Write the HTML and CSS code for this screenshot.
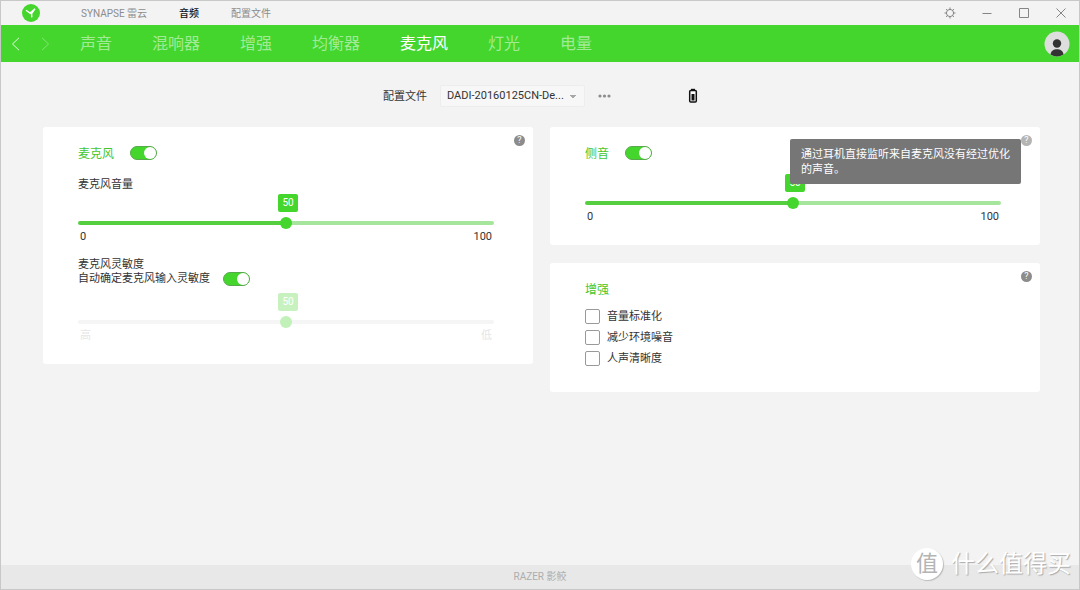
FILE: index.html
```html
<!DOCTYPE html>
<html lang="zh-CN">
<head>
<meta charset="utf-8">
<title>雷云 - 麦克风</title>
<link rel="stylesheet" href="styles.css">
</head>
<body>
<div class="window">
  <header class="titlebar">
    <svg class="logo" viewBox="0 0 18 18" aria-hidden="true">
      <circle cx="9" cy="9" r="9" fill="#44d62c"/>
      <path d="M4 6.200 8 9 13 4.800M12.700 5.200 9.600 9.600 9.800 13.400M7.600 8.600 9.800 10.200" fill="none" stroke="#fff" stroke-width="1.400"/>
    </svg>
    <nav class="tabs">
      <a class="tab" href="#synapse">SYNAPSE 雷云</a>
      <a class="tab tab-active" href="#audio">音频</a>
      <a class="tab" href="#profiles">配置文件</a>
    </nav>
    <div class="window-buttons">
      <button type="button" class="icon-button" aria-label="设置">
        <svg width="12" height="12" viewBox="0 0 12 12" fill="none" stroke="#858585"><circle cx="6" cy="6" r="3.6"/><path d="M6 .5v2M6 9.500v2M.5 6h2M9.500 6h2M2.100 2.100l1.400 1.400M8.500 8.500l1.400 1.400M9.900 2.100 8.500 3.500M3.500 8.500 2.100 9.900"/></svg>
      </button>
      <button type="button" class="icon-button" aria-label="最小化">
        <svg width="12" height="12" viewBox="0 0 12 12" fill="none" stroke="#858585"><path d="M1.500 6.500h9"/></svg>
      </button>
      <button type="button" class="icon-button" aria-label="最大化">
        <svg width="12" height="12" viewBox="0 0 12 12" fill="none" stroke="#858585"><path d="M1.500 1.500h9v9h-9z"/></svg>
      </button>
      <button type="button" class="icon-button" aria-label="关闭">
        <svg width="12" height="12" viewBox="0 0 12 12" fill="none" stroke="#858585"><path d="M1.500 1.500l9 9M10.500 1.500l-9 9"/></svg>
      </button>
    </div>
  </header>

  <div class="navbar">
    <div class="history">
      <button type="button" class="icon-button" aria-label="后退">
        <svg width="10" height="14" viewBox="0 0 10 14" fill="none" stroke="#e4fae0"><path d="M9 .8 2.500 7 9 13.200"/></svg>
      </button>
      <button type="button" class="icon-button" aria-label="前进">
        <svg width="10" height="14" viewBox="0 0 10 14" fill="none" stroke="#86e577"><path d="M2 .8 8.500 7 2 13.200"/></svg>
      </button>
    </div>
    <nav class="sections">
      <a class="section" href="#sound">声音</a>
      <a class="section" href="#mixer">混响器</a>
      <a class="section" href="#enhance">增强</a>
      <a class="section" href="#equalizer">均衡器</a>
      <a class="section section-active" href="#mic">麦克风</a>
      <a class="section" href="#lighting">灯光</a>
      <a class="section" href="#power">电量</a>
    </nav>
    <button type="button" class="icon-button avatar" aria-label="账户">
      <svg width="26" height="26" viewBox="0 0 26 26"><circle cx="13" cy="13" r="12.500" fill="#dedede"/><circle cx="13" cy="12.500" r="4.200" fill="#333"/><path d="M6.500 23.500C7 19.500 10 18.200 13 18.200s6 1.300 6.500 5.300A12.500 12.500 0 0 1 6.500 23.500z" fill="#333"/></svg>
    </button>
  </div>

  <main class="content">
    <div class="profile">
      <label class="profile-label" for="profile">配置文件</label>
      <select id="profile" class="profile-select"><option>DADI-20160125CN-De...</option></select>
      <button type="button" class="icon-button more" aria-label="更多">
        <svg width="13" height="4" viewBox="0 0 13 4" fill="#8c8c8c"><circle cx="2" cy="2" r="1.600"/><circle cx="6.500" cy="2" r="1.600"/><circle cx="11" cy="2" r="1.600"/></svg>
      </button>
      <svg class="battery" width="10" height="16" viewBox="0 0 10 16"><path d="M3 .8h4v2H3z" fill="#111"/><rect x="1.700" y="2.500" width="6.600" height="11.600" rx="1" fill="#fff" stroke="#111" stroke-width="1.500"/><path d="M3.500 6h3v6.500h-3z" fill="#111"/></svg>
    </div>

    <div class="cards">
      <section class="card">
        <button type="button" class="help" aria-label="帮助">?</button>
        <div class="card-header">
          <h2 class="card-title" id="mic-title">麦克风</h2>
          <input type="checkbox" role="switch" class="toggle" aria-labelledby="mic-title" checked>
        </div>
        <label class="caption" for="volume">麦克风音量</label>
        <div class="slider">
          <output class="bubble" for="volume">50</output>
          <input type="range" id="volume" class="range" min="0" max="100" value="50">
          <div class="scale"><span>0</span><span>100</span></div>
        </div>
        <label class="caption caption-next" for="sensitivity">麦克风灵敏度</label>
        <div class="auto-row">
          <label for="auto">自动确定麦克风输入灵敏度</label>
          <input type="checkbox" role="switch" id="auto" class="toggle" checked>
        </div>
        <div class="slider slider-disabled">
          <output class="bubble" for="sensitivity">50</output>
          <input type="range" id="sensitivity" class="range" min="0" max="100" value="50" disabled>
          <div class="scale"><span>高</span><span>低</span></div>
        </div>
      </section>

      <div class="column">
        <section class="card">
          <button type="button" class="help help-hover" aria-label="帮助" aria-describedby="tip">?</button>
          <div class="tooltip" role="tooltip" id="tip">通过耳机直接监听来自麦克风没有经过优化的声音。</div>
          <div class="card-header">
            <h2 class="card-title" id="side-title">侧音</h2>
            <input type="checkbox" role="switch" class="toggle" aria-labelledby="side-title" checked>
          </div>
          <div class="slider slider-side">
            <output class="bubble" for="sidetone">50</output>
            <input type="range" id="sidetone" class="range" min="0" max="100" value="50" aria-labelledby="side-title">
            <div class="scale"><span>0</span><span>100</span></div>
          </div>
        </section>

        <section class="card">
          <button type="button" class="help" aria-label="帮助">?</button>
          <div class="card-header"><h2 class="card-title">增强</h2></div>
          <div class="options">
            <label class="option"><input type="checkbox" class="box">音量标准化</label>
            <label class="option"><input type="checkbox" class="box">减少环境噪音</label>
            <label class="option"><input type="checkbox" class="box">人声清晰度</label>
          </div>
        </section>
      </div>
    </div>
  </main>

  <footer class="footer">RAZER 影鲛</footer>
  <div class="watermark"><span class="watermark-badge">值</span><span>什么值得买</span></div>
</div>
</body>
</html>
```
FILE: styles.css
```css
* { box-sizing: border-box; }

body {
  margin: 0;
  font: 11px/14px Roboto, "Noto Sans CJK SC", sans-serif;
  color: #333;
}

button, select, input { font: inherit; margin: 0; }
a { text-decoration: none; }

.window {
  position: relative;
  display: flex;
  flex-direction: column;
  min-height: 100vh;
  background: #f3f3f3;
  border: 1px solid #c8c8c8;
}

.icon-button {
  display: flex;
  align-items: center;
  justify-content: center;
  padding: 0;
  border: 0;
  background: none;
}

/* Title bar */
.titlebar {
  display: flex;
  align-items: center;
  height: 24px;
  padding: 0 12px 0 21px;
}
.logo { width: 18px; height: 18px; }
.tabs {
  display: flex;
  gap: 32px;
  margin-left: 41px;
  padding-top: 2px;
  font-size: 10px;
}
.tab { color: #8c8c8c; }
.tab-active { color: #111; font-weight: 500; }
.window-buttons { display: flex; gap: 25px; margin-left: auto; }

/* Section bar */
.navbar {
  display: flex;
  align-items: center;
  height: 37px;
  padding: 0 9px;
  background: #44d62c;
}
.history { display: flex; gap: 20px; }
.sections {
  display: flex;
  gap: 40px;
  margin-left: 30px;
  font-size: 16px;
  line-height: 24px;
}
.section { color: #a2eb96; }
.section-active { color: #fff; }
.avatar { margin-left: auto; }

/* Profile row */
.content { flex: 1; padding: 23px 39px 20px 42px; }
.profile {
  display: flex;
  align-items: center;
  justify-content: center;
  height: 22px;
  padding-right: 2px;
}
.profile-label { padding-top: 2px; }
.profile-select {
  width: 145px;
  height: 22px;
  margin: 0 13px;
  padding: 0 6px;
  appearance: none;
  border: 1px solid #ededed;
  border-radius: 2px;
  color: #333;
  background:
    linear-gradient(to bottom right, #a8a8a8 50%, transparent 51%) 132px 9px / 3px 3px no-repeat,
    linear-gradient(to bottom left, #a8a8a8 50%, transparent 51%) 129px 9px / 3px 3px no-repeat,
    #f7f7f7;
}
.battery { margin-left: 77px; }

/* Cards */
.cards {
  display: grid;
  grid-template-columns: 1fr 1fr;
  align-items: start;
  gap: 17px;
  margin-top: 20px;
}
.column { display: grid; gap: 18px; }
.card {
  position: relative;
  padding: 18px 39px 21px 35px;
  background: #fff;
  border-radius: 3px;
}
.card-header { display: flex; align-items: center; gap: 16px; height: 16px; }
.card-title {
  margin: 0;
  padding-top: 2px;
  font-size: 12px;
  font-weight: 400;
  color: #44c72e;
}
.caption { display: block; margin-top: 17px; }
.caption-next { margin-top: 14px; }
.auto-row { display: flex; align-items: center; gap: 13px; }

.help {
  position: absolute;
  top: 8px;
  right: 8px;
  width: 11px;
  height: 11px;
  padding: 0;
  border: 0;
  border-radius: 50%;
  background: #8c8c8c;
  color: #fff;
  font-size: 9px;
  line-height: 11px;
  text-align: center;
}
.help-hover { background: #b4b4b4; }

.tooltip {
  position: absolute;
  z-index: 2;
  top: 12px;
  right: 19px;
  width: 231px;
  padding: 8px 11px 7px;
  border-radius: 2px;
  background: #767677;
  color: #fff;
  line-height: 15px;
}

.toggle {
  appearance: none;
  display: flex;
  justify-content: flex-end;
  width: 27px;
  height: 14px;
  border: 1px solid #58a94c;
  border-radius: 7px;
  background: #44d62c;
}
.toggle::before {
  content: "";
  width: 12px;
  height: 12px;
  border-radius: 50%;
  background: #fff;
}

/* Sliders */
.slider { position: relative; padding-top: 25px; }
.slider-side { margin-top: 11px; }
.range {
  appearance: none;
  display: block;
  width: 100%;
  height: 12px;
  background: none;
}
.range::-webkit-slider-runnable-track {
  height: 4px;
  border-radius: 2px;
  background: linear-gradient(to right, #55cf40 50%, #a6e59c 50%);
}
.range::-webkit-slider-thumb {
  appearance: none;
  width: 12px;
  height: 12px;
  margin-top: -4px;
  border-radius: 50%;
  background: #44d62c;
}
.bubble {
  position: absolute;
  top: 2px;
  left: 50%;
  width: 20px;
  margin-left: -8px;
  border-radius: 2px;
  background: #44d62c;
  color: #fff;
  font-size: 10px;
  line-height: 18px;
  text-align: center;
}
.scale { display: flex; justify-content: space-between; padding: 1px 2px 0; }

.slider-disabled { margin-top: 5px; }
.slider-disabled .range::-webkit-slider-runnable-track { background: #f5f5f5; }
.slider-disabled .range::-webkit-slider-thumb { background: #c1f1b9; }
.slider-disabled .bubble { background: #c7f2c0; }
.slider-disabled .scale { color: #e6e6e6; }

/* Check boxes */
.options { display: grid; gap: 6px; margin: 12px 0 5px; }
.option { display: flex; align-items: flex-end; gap: 7px; }
.box {
  appearance: none;
  width: 15px;
  height: 15px;
  border: 1px solid #999;
  border-radius: 2px;
  background: #fff;
}

.footer {
  height: 24px;
  background: #e8e8e8;
  color: #adadad;
  font-size: 10px;
  line-height: 24px;
  text-align: center;
}

.watermark {
  position: absolute;
  right: 8px;
  bottom: 9px;
  display: flex;
  align-items: center;
  gap: 8px;
  color: #fff;
  font-size: 24px;
  line-height: 32px;
  text-shadow: 1px 1px 1px #aaa;
}
.watermark-badge {
  width: 32px;
  border-radius: 50%;
  background: #fff;
  box-shadow: 1px 1px 1px #bbb;
  color: #b4b4b4;
  font-size: 22px;
  text-align: center;
  text-shadow: none;
}
```
